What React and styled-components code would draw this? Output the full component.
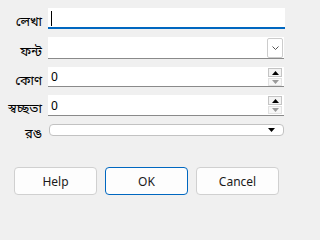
import React from 'react';
import styled, { createGlobalStyle } from 'styled-components';

const GlobalStyle = createGlobalStyle`
  html, body {
    margin: 0;
    padding: 0;
    background: #f0f0f0;
  }
  body {
    font-family: "Noto Sans", "Noto Sans Bengali", "DejaVu Sans", sans-serif;
    font-size: 12px;
    color: #000;
  }
`

const Dialog = styled.div`
  width: 293px;
  height: 210px;
  background: #f0f0f0;
  display: flex;
  flex-direction: column;
  box-sizing: border-box;
`

const Form = styled.div`
  display: grid;
  grid-template-columns: 42px 1fr;
  grid-template-rows: 21px 22px 20px 21px 12px;
  column-gap: 6px;
  row-gap: 8px;
  padding: 8px 8px 0 0;
`

const Label = styled.label`
  display: flex;
  align-items: center;
  justify-content: flex-end;
  font-size: 13px;
  line-height: 1;
  white-space: nowrap;
  padding-top: 6px;
`

const TextField = styled.div`
  position: relative;
  background: #fff;
  border-bottom: 2px solid #0067c0;
  box-sizing: border-box;
`

const Caret = styled.span`
  position: absolute;
  left: 3px;
  top: 3px;
  width: 1px;
  height: 15px;
  background: #000;
`

const Combo = styled.div`
  display: flex;
  justify-content: flex-end;
  align-items: center;
  background: #fff;
  border-bottom: 1px solid #8a8a8a;
  box-sizing: border-box;
  margin-right: 1px;
`

const DropButton = styled.div`
  width: 16px;
  height: 20px;
  margin-right: 1px;
  margin-top: 1px;
  align-self: flex-start;
  border: 1px solid #cccccc;
  border-radius: 2px;
  box-sizing: border-box;
  display: flex;
  align-items: center;
  justify-content: center;
`

const Spin = styled.div`
  display: flex;
  align-items: center;
  justify-content: space-between;
  background: #fff;
  border-bottom: 1px solid #8a8a8a;
  box-sizing: border-box;
  padding-left: 3px;
  margin-right: 1px;
`

const Value = styled.span`
  font-size: 12px;
  line-height: 1;
  margin-top: 1px;
`

const SpinButtons = styled.div`
  display: flex;
  flex-direction: column;
  align-self: flex-start;
  margin-top: 1px;
  margin-right: 2px;
  gap: 1px;
`

const SpinButton = styled.div`
  width: 14px;
  height: ${p => p.$h}px;
  box-sizing: border-box;
  border: 1px solid ${p => (p.$active ? '#c4c4c4' : '#e2e2e2')};
  background: ${p => (p.$active ? '#f3f3f3' : '#f7f7f7')};
  display: flex;
  align-items: center;
  justify-content: center;
`

const ColorPicker = styled.div`
  display: flex;
  align-items: center;
  justify-content: flex-end;
  background: #fff;
  border: 1px solid #c2c2c2;
  border-radius: 4px;
  box-sizing: border-box;
  margin-left: 1px;
  margin-right: 1px;
  padding-right: 8px;
`

const Buttons = styled.div`
  display: flex;
  gap: 8px;
  padding: 0 0 0 14px;
  margin-top: 31px;
`

const Button = styled.button`
  width: 83px;
  height: 28px;
  box-sizing: border-box;
  background: #fdfdfd;
  border: 1px solid ${p => (p.$primary ? '#0067c0' : '#d0d0d0')};
  border-radius: 4px;
  font-family: "Noto Sans", "DejaVu Sans", sans-serif;
  font-size: 12px;
  color: #1a1a1a;
  padding: 0;
`

const Tri = ({ up, color }) => (
  <svg width="7" height="4" viewBox="0 0 7 4">
    <polygon points={up ? '0,4 7,4 3.5,0' : '0,0 7,0 3.5,4'} fill={color} />
  </svg>
)

const Chevron = () => (
  <svg width="7" height="4" viewBox="0 0 7 4">
    <polyline points="0.5,0.5 3.5,3.5 6.5,0.5" fill="none" stroke="#555" strokeWidth="1" />
  </svg>
)

const SpinBox = ({ value }) => (
  <Spin>
    <Value>{value}</Value>
    <SpinButtons>
      <SpinButton $h={9} $active>
        <Tri up color="#000" />
      </SpinButton>
      <SpinButton $h={8}>
        <Tri color="#9a9a9a" />
      </SpinButton>
    </SpinButtons>
  </Spin>
)

export default function App() {
  return (
    <Dialog>
      <GlobalStyle />
      <Form>
        <Label>লেখা</Label>
        <TextField>
          <Caret />
        </TextField>

        <Label>ফন্ট</Label>
        <Combo>
          <DropButton>
            <Chevron />
          </DropButton>
        </Combo>

        <Label>কোণ</Label>
        <SpinBox value="0" />

        <Label>স্বচ্ছতা</Label>
        <SpinBox value="0" />

        <Label>রঙ</Label>
        <ColorPicker>
          <Tri color="#000" />
        </ColorPicker>
      </Form>
      <Buttons>
        <Button>Help</Button>
        <Button $primary>OK</Button>
        <Button>Cancel</Button>
      </Buttons>
    </Dialog>
  );
}
